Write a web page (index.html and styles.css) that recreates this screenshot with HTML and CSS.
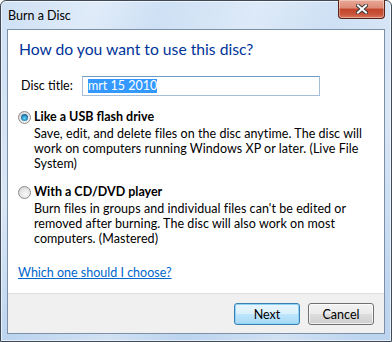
FILE: index.html
```html
<!DOCTYPE html>
<html lang="en">
<head>
    <meta charset="UTF-8">
    <title>Burn a Disc</title>
    <link rel="stylesheet" href="styles.css">
</head>
<body>
<div class="window">
    <!-- title bar -->
    <div class="titlebar">
        <span class="title">Burn a Disc</span>
        <div class="close">
            <svg width="12" height="10" viewBox="0 0 12 10">
                <path d="M2 1.5 L10 8.5 M10 1.5 L2 8.5" stroke="#3b3b3b" stroke-width="4" stroke-linecap="square"/>
                <path d="M2 1.5 L10 8.5 M10 1.5 L2 8.5" stroke="#ffffff" stroke-width="2" stroke-linecap="square"/>
            </svg>
        </div>
    </div>

    <div class="client">
        <div class="content">
            <h1 class="instruction">How do you want to use this disc?</h1>

            <div class="field">
                <label class="field-label">Disc title:</label>
                <div class="textbox"><span class="selected">mrt 15 2010</span></div>
            </div>

            <div class="option">
                <span class="radio checked"></span>
                <div class="option-text">
                    <div class="option-title">Like a USB flash drive</div>
                    <div class="option-desc">Save, edit, and delete files on the disc anytime. The disc will<br>work on computers running Windows XP or later. (Live File<br>System)</div>
                </div>
            </div>

            <div class="option second">
                <span class="radio"></span>
                <div class="option-text">
                    <div class="option-title">With a CD/DVD player</div>
                    <div class="option-desc">Burn files in groups and individual files can't be edited or<br>removed after burning. The disc will also work on most<br>computers. (Mastered)</div>
                </div>
            </div>

            <a class="help" href="javascript:">Which one should I choose?</a>
        </div>

        <div class="footer">
            <button class="btn default">Next</button>
            <button class="btn">Cancel</button>
        </div>
    </div>
</div>
</body>
</html>
```

FILE: styles.css
```css
* {
    margin: 0;
    padding: 0;
    box-sizing: border-box;
}

body {
    font-family: "Lato", "Noto Sans", sans-serif;
    font-size: 12.5px;
    color: #000;
    background: #fff;
}

/* window frame */
.window {
    width: 392px;
    height: 342px;
    border: 1px solid #404a56;
    border-radius: 6px 6px 0 0;
    padding: 0 6px 7px;
    background:
        linear-gradient(115deg, rgba(255,255,255,0) 0%, rgba(255,255,255,0.35) 18%, rgba(255,255,255,0) 30%, rgba(255,255,255,0.3) 48%, rgba(255,255,255,0) 62%, rgba(255,255,255,0.3) 80%, rgba(255,255,255,0) 95%),
        linear-gradient(#cfe1f5, #bcd4ee);
    box-shadow: inset 0 0 0 1px rgba(255,255,255,0.6);
}

.titlebar {
    height: 28px;
    display: flex;
    justify-content: space-between;
    align-items: flex-start;
}

.title {
    padding: 7px 0 0 1px;
    line-height: 16px;
}

/* close button */
.close {
    width: 47px;
    height: 19px;
    margin-top: -1px;
    border: 1px solid #5a2318;
    border-top: none;
    border-radius: 0 0 4px 4px;
    background: linear-gradient(#e9a897 0%, #dd8b77 45%, #c2442c 50%, #c9543b 80%, #da7b62 100%);
    box-shadow: inset 0 0 0 1px rgba(255,255,255,0.35);
    display: flex;
    align-items: center;
    justify-content: center;
}

/* client area */
.client {
    border: 1px solid #7d8fa6;
    background: #fff;
}

.content {
    height: 263px;
    padding: 9px 0 0 10px;
}

.instruction {
    font-size: 15.7px;
    font-weight: normal;
    line-height: 20px;
    color: #003399;
    margin-left: 1px;
}

.field {
    display: flex;
    align-items: center;
    margin: 17px 0 0 3px;
}

.field-label {
    width: 61px;
    line-height: 16px;
}

.textbox {
    width: 238px;
    height: 20px;
    border: 1px solid #a6bfd8;
    border-top-color: #6f9cc6;
    padding: 2px 0 0 5px;
    line-height: 14px;
}

.selected {
    background: #3399ff;
    color: #fff;
    display: inline-block;
    line-height: 14px;
}

/* options */
.option {
    display: flex;
    align-items: flex-start;
    margin-top: 13px;
    line-height: 15px;
}

.radio {
    width: 13px;
    height: 13px;
    border-radius: 50%;
    border: 1px solid #8c8c8c;
    background: radial-gradient(circle at 60% 65%, #f8f8f8 0%, #e6e6e6 50%, #c9c9c9 100%);
    margin: 2px 3px 0 0;
    flex: none;
    position: relative;
}

.radio.checked::after {
    content: "";
    position: absolute;
    left: 2px;
    top: 2px;
    width: 7px;
    height: 7px;
    border-radius: 50%;
    background: radial-gradient(circle at 50% 60%, #6ce0f8 0%, #2b8cc4 45%, #123f63 100%);
}

.option-title {
    font-weight: bold;
}

.option-desc {
    margin-top: 2px;
    letter-spacing: 0.05px;
}

.help {
    display: inline-block;
    margin-top: 19px;
    line-height: 15px;
    color: #0066cc;
}

/* footer */
.footer {
    height: 40px;
    border-top: 1px solid #dfdfdf;
    background: #f0f0f0;
    display: flex;
    justify-content: flex-end;
    align-items: flex-start;
    gap: 8px;
    padding: 9px 10px 0 0;
}

.btn {
    width: 66px;
    height: 22px;
    font-family: inherit;
    font-size: 12.5px;
    color: #000;
    border: 1px solid #707070;
    border-radius: 3px;
    background: linear-gradient(#f2f2f2 0%, #ebebeb 50%, #dddddd 50%, #cfcfcf 100%);
    box-shadow: inset 0 0 0 1px rgba(255,255,255,0.7);
}

.btn.default {
    border-color: #3c7fb1;
    background: linear-gradient(#eaf6fd 0%, #d9f0fc 50%, #bee6fd 50%, #a7d9f5 100%);
    box-shadow: inset 0 0 0 1px #8fd3f6;
}
```
